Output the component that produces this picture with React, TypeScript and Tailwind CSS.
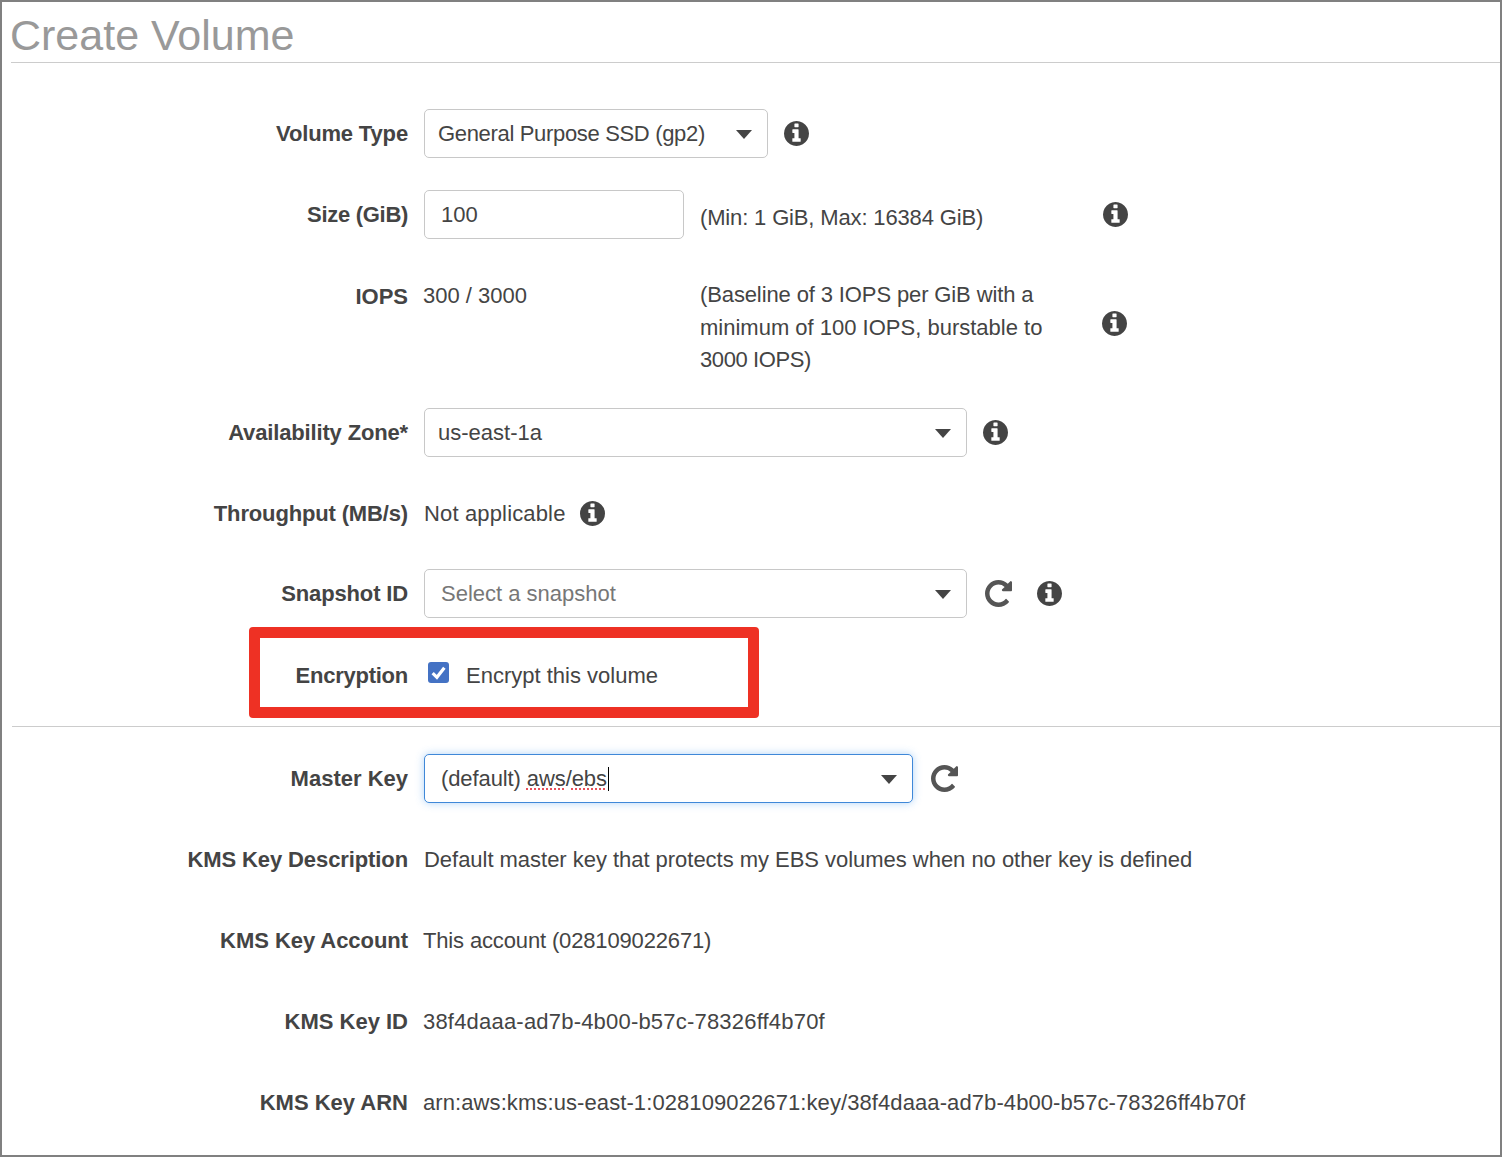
import React from 'react';

// Font Awesome 4 glyphs, react-icons only ships the newer shapes
const Info = () => (
  <svg viewBox="128 128 1536 1536" className="h-[25px] w-[25px] shrink-0" fill="#444">
    <path d="M1152 1376v-160q0-14-9-23t-23-9h-96v-512q0-14-9-23t-23-9h-320q-14 0-23 9t-9 23v160q0 14 9 23t23 9h96v320h-96q-14 0-23 9t-9 23v160q0 14 9 23t23 9h448q14 0 23-9t9-23zm-128-896v-160q0-14-9-23t-23-9h-192q-14 0-23 9t-9 23v160q0 14 9 23t23 9h192q14 0 23-9t9-23zm640 416q0 209-103 385.5t-279.5 279.5-385.5 103-385.5-103-279.5-279.5-103-385.5 103-385.5 279.5-279.5 385.5-103 385.5 103 279.5 279.5 103 385.5z" />
  </svg>
);

const Refresh = () => (
  <svg viewBox="128 128 1536 1536" className="h-[27px] w-[27px] shrink-0" fill="#555">
    <path d="M1664 256v448q0 26-19 45t-45 19h-448q-42 0-59-40-17-39 14-69l138-138q-148-137-349-137-104 0-198.5 40.5t-163.5 109.5-109.5 163.5-40.5 198.5 40.5 198.5 109.5 163.5 163.5 109.5 198.5 40.5q119 0 225-52t179-147q7-10 23-12 15 0 25 9l137 138q9 8 9.5 20.5t-7.5 22.5q-109 132-264 204.5t-327 72.5q-156 0-298-61t-245-164-164-245-61-298 61-298 164-245 245-164 298-61q147 0 284.5 55.5t244.5 156.5l130-129q29-31 70-14 39 17 39 59z" />
  </svg>
);

const Caret = () => (
  <span className="mt-[2px] h-0 w-0 border-x-[8.5px] border-t-[9px] border-x-transparent border-t-[#444]" />
);

const Row: React.FC<{ label: string; className?: string; labelClass?: string; children: React.ReactNode }> = ({
  label,
  className,
  labelClass,
  children,
}) => (
  <div className={`flex items-center ${className ?? 'mb-[32px] h-[49px]'}`}>
    <div className={`mr-[16px] w-[406px] text-right font-bold ${labelClass ?? 'tracking-[-0.15px]'}`}>{label}</div>
    {children}
  </div>
);

const Select: React.FC<{ width: string; pad?: string; focused?: boolean; children: React.ReactNode }> = ({
  width,
  pad,
  focused,
  children,
}) => (
  <div
    className={`flex h-[49px] shrink-0 items-center justify-between rounded-[5px] border bg-white pr-[15px] ${width} ${pad ?? 'pl-[13px]'} ${
      focused ? 'border-[#3f88d8] shadow-[0_0_8px_rgba(80,160,240,0.45)]' : 'border-[#c8c8c8]'
    }`}
  >
    <span>{children}</span>
    <Caret />
  </div>
);

export default function App() {
  return (
    <div className="relative h-[1157px] w-[1502px] overflow-hidden border-2 border-[#808080] bg-white font-['Liberation_Sans',Arial,sans-serif] text-[22px] text-[#444]">
      <div className="ml-[9px] h-[61px] border-b border-[#ccc] pt-[5px]">
        <h1 className="-ml-px text-[43px] leading-[56px] text-[#999]">Create Volume</h1>
      </div>

      <div className="pt-[46px]">
        <Row label="Volume Type">
          <Select width="w-[344px]"><span className="tracking-[-0.33px]">General Purpose SSD (gp2)</span></Select>
          <span className="ml-[16px] flex"><Info /></span>
        </Row>

        <Row label="Size (GiB)" labelClass="tracking-[-0.3px]">
          <input
            readOnly
            value="100"
            className="h-[49px] w-[260px] shrink-0 rounded-[5px] border border-[#c8c8c8] pl-[16px] outline-none"
          />
          <span className="ml-[16px] w-[403px] pt-[5px] tracking-[-0.15px]">(Min: 1 GiB, Max: 16384 GiB)</span>
          <Info />
        </Row>

        <Row label="IOPS" className="mb-[32px] h-[105px]" labelClass="self-start pt-[9px]">
          <span className="-ml-px w-[277px] shrink-0 self-start pt-[8px]">300 / 3000</span>
          <span className="w-[402px] shrink-0 self-start pt-[8px] leading-[32.5px]">
            <span className="tracking-[-0.12px]">(Baseline of 3 IOPS per GiB with a</span>
            <br />
            minimum of 100 IOPS, burstable to
            <br />
            <span className="tracking-[-0.4px]">3000 IOPS)</span>
          </span>
          <Info />
        </Row>

        <Row label="Availability Zone*">
          <Select width="w-[543px]">us-east-1a</Select>
          <span className="ml-[16px] flex"><Info /></span>
        </Row>

        <Row label="Throughput (MB/s)" className="mb-[31px] h-[49px]">
          <span className="tracking-[0.15px]">Not applicable</span>
          <span className="ml-[14px] flex"><Info /></span>
        </Row>

        <Row label="Snapshot ID" className="mb-[33px] h-[49px]">
          <Select width="w-[543px]" pad="pl-[16px]"><span className="text-[#777]">Select a snapshot</span></Select>
          <span className="ml-[18px] flex"><Refresh /></span>
          <span className="ml-[25px] flex"><Info /></span>
        </Row>

        <Row label="Encryption" className="mb-[26px] h-[49px]" labelClass="tracking-[-0.25px]">
          <span className="mb-[6px] ml-[4px] mr-[17px] flex h-[21px] w-[21px] items-center justify-center rounded-[3px] bg-[#4472c4]">
            <svg viewBox="0 0 16 16" className="h-[17px] w-[17px]" fill="none" stroke="#fff" strokeWidth="3">
              <path d="M2.5 8.5 6.5 12.5 13.5 3.5" />
            </svg>
          </span>
          <span>Encrypt this volume</span>
        </Row>

        <div className="ml-[10px] border-t border-[#ccc]" />

        <Row label="Master Key" className="mb-[32px] mt-[27px] h-[49px]" labelClass="tracking-[0px]">
          <Select width="w-[489px]" pad="pl-[16px]" focused>
            <span className="tracking-[-0.1px]">
              (default){' '}
              <span className="underline decoration-[#e8505b] decoration-dotted decoration-2 underline-offset-2">aws</span>/
              <span className="underline decoration-[#e8505b] decoration-dotted decoration-2 underline-offset-2">ebs</span>
            </span>
            <span className="ml-px inline-block h-[24px] w-px bg-black align-[-5px]" />
          </Select>
          <span className="ml-[18px] flex"><Refresh /></span>
        </Row>

        <Row label="KMS Key Description" className="mb-[31.5px] h-[49px]" labelClass="tracking-[-0.1px]">
          <span className="tracking-[-0.03px]">Default master key that protects my EBS volumes when no other key is defined</span>
        </Row>
        <Row label="KMS Key Account" labelClass="tracking-[-0.05px]">
          <span className="-ml-px tracking-[-0.15px]">This account (028109022671)</span>
        </Row>
        <Row label="KMS Key ID" labelClass="tracking-[0px]">
          <span className="-ml-px tracking-[0.2px]">38f4daaa-ad7b-4b00-b57c-78326ff4b70f</span>
        </Row>
        <Row label="KMS Key ARN" labelClass="tracking-[0px]">
          <span className="-ml-px tracking-[0.09px]">arn:aws:kms:us-east-1:028109022671:key/38f4daaa-ad7b-4b00-b57c-78326ff4b70f</span>
        </Row>
      </div>

      {/* red highlight drawn over the encryption row */}
      <div className="absolute left-[247px] top-[625px] h-[91px] w-[510px] rounded-[4px] border-[11px] border-[#ee3124]" />
    </div>
  );
}
